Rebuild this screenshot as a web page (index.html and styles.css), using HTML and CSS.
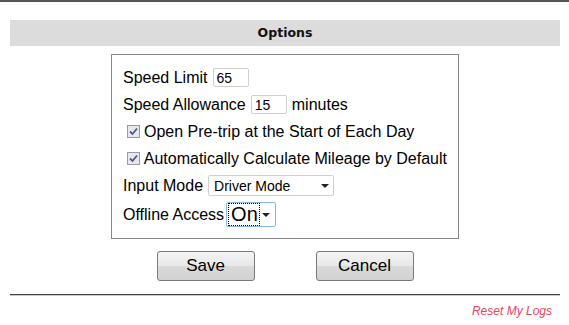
FILE: index.html
```html
<!DOCTYPE html>
<html lang="en">
<head>
    <meta charset="UTF-8">
    <title>Options</title>
    <link rel="stylesheet" href="styles.css">
</head>
<body>
    <div class="topline"></div>
    <div class="header">Options</div>
    <div class="options">
        <div class="row">Speed Limit<input class="num" type="text" value="65"></div>
        <div class="row">Speed Allowance<input class="num" type="text" value="15"><span class="unit">minutes</span></div>
        <div class="row check">
            <span class="box"><svg width="9" height="9" viewBox="0 0 9 9"><path d="M1 4.5 L3.5 7 L8 1.5" fill="none" stroke="#4a5a8c" stroke-width="1.8"/></svg></span>
            Open Pre-trip at the Start of Each Day
        </div>
        <div class="row check">
            <span class="box"><svg width="9" height="9" viewBox="0 0 9 9"><path d="M1 4.5 L3.5 7 L8 1.5" fill="none" stroke="#4a5a8c" stroke-width="1.8"/></svg></span>
            Automatically Calculate Mileage by Default
        </div>
        <div class="row">Input Mode<span class="select mode"><span class="val">Driver Mode</span><span class="arrow"></span></span></div>
        <div class="row last">Offline Access<span class="select offline"><span class="val">On</span><span class="arrow"></span></span></div>
    </div>
    <div class="buttons">
        <button class="btn">Save</button>
        <button class="btn">Cancel</button>
    </div>
    <div class="rule"></div>
    <div class="reset"><a href="#">Reset My Logs</a></div>
</body>
</html>
```

FILE: styles.css
```css
body
{
    margin: 0;
    font-family: "Liberation Sans", Arial, sans-serif;
    font-size: 16px;
    color: #000;
    background: #fff;
}
.topline
{
    height: 2px;
    background: #555;
}
.header
{
    margin: 18px 9px 0 10px;
    height: 26px;
    line-height: 26px;
    background: #dcdcdc;
    text-align: center;
    font-family: "DejaVu Sans", Verdana, sans-serif;
    font-weight: bold;
    font-size: 12.5px;
    color: #111;
}
.options
{
    width: 324px;
    margin: 8px 0 0 111px;
    padding: 9px 11px 8px 11px;
    border: 1px solid #888;
    display: flex;
    flex-direction: column;
}
.row
{
    height: 27px;
    display: flex;
    align-items: center;
    white-space: nowrap;
}
.row.last
{
    height: 31px;
}
.num
{
    box-sizing: border-box;
    width: 36px;
    height: 19px;
    margin-left: 5px;
    padding: 0 3px;
    border: 1px solid #cfcfcf;
    border-radius: 2px;
    font-family: "Liberation Sans", Arial, sans-serif;
    font-size: 14px;
}
.unit
{
    margin-left: 5px;
}
.check .box
{
    box-sizing: border-box;
    width: 13px;
    height: 13px;
    margin: 0 4px 0 4px;
    border: 1px solid #9a9aa6;
    background: #e8e8ec;
    display: flex;
    align-items: center;
    justify-content: center;
}
.select
{
    box-sizing: border-box;
    position: relative;
    display: flex;
    align-items: center;
    border: 1px solid #d0d0d0;
    border-radius: 2px;
    background: #fff;
}
.select .arrow
{
    position: absolute;
    top: 50%;
    margin-top: -2px;
    border-left: 4px solid transparent;
    border-right: 4px solid transparent;
    border-top: 4px solid #222;
}
.mode
{
    width: 126px;
    height: 21px;
    margin-left: 5px;
    padding-left: 5px;
    font-size: 14px;
}
.mode .arrow
{
    right: 4px;
}
.offline
{
    width: 50px;
    height: 25px;
    margin-left: 2px;
    border-color: #8ab8e4;
    padding: 1px;
    font-size: 20px;
}
.offline .val
{
    height: 21px;
    line-height: 21px;
    padding: 0 1px 0 2px;
    border: 1px dotted #000;
}
.offline .arrow
{
    right: 5px;
}
.buttons
{
    margin-top: 12px;
    display: flex;
    justify-content: center;
    gap: 61px;
    padding-left: 1px;
}
.btn
{
    width: 98px;
    height: 30px;
    border: 1px solid #7a7a7a;
    border-radius: 3px;
    background: linear-gradient(#f4f4f4, #e8e8e8 50%, #dadada 51%, #d2d2d2);
    font-family: "Liberation Sans", Arial, sans-serif;
    font-size: 17px;
    color: #000;
    padding: 0;
}
.rule
{
    margin: 13px 9px 0 10px;
    border-top: 1px solid #444;
    border-bottom: 1px solid #c8c8c8;
}
.reset
{
    margin-top: 8px;
    padding-right: 17px;
    text-align: right;
    font-size: 12px;
    font-style: italic;
}
.reset a
{
    color: #ec4458;
    text-decoration: none;
}
```
